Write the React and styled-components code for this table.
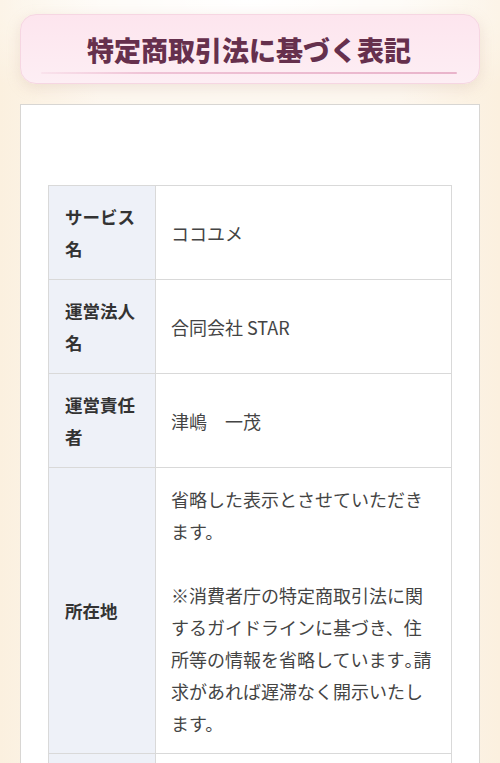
import styled, { createGlobalStyle } from "styled-components";

const GlobalStyle = createGlobalStyle`
  html, body {
    margin: 0;
    padding: 0;
  }
  body {
    background-color: #fcf3e4;
    background-image:
      radial-gradient(ellipse 70% 120px at 50% 0%, #ffffff 0%, rgba(255,255,255,0) 100%),
      linear-gradient(90deg, #fbf0df 0%, #fdf7ee 20%, #fdf7ee 80%, #fbf0df 100%);
    font-family: "Noto Sans CJK JP", "Noto Sans", sans-serif;
  }
`;

const Page = styled.div`
  padding: 14px 20px 0;
  min-height: 763px;
  box-sizing: border-box;
`;

const TitleCard = styled.div`
  background: linear-gradient(180deg, #fde5ee 0%, #fdeef4 100%);
  border: 1px solid #f6d6e2;
  border-radius: 16px;
  box-shadow: 0 4px 14px rgba(205, 170, 150, 0.28);
  padding: 18px 22px 9px 20px;
  margin-bottom: 20px;
`;

const Title = styled.h1`
  margin: 0;
  text-align: center;
  font-size: 27px;
  line-height: 34px;
  font-weight: 900;
  color: #66304d;
  letter-spacing: 0;
`;

const Underline = styled.div`
  height: 2px;
  margin-top: 5px;
  border-radius: 1px;
  background: linear-gradient(90deg, rgba(236, 185, 207, 0.2) 0%, #efc3d6 25%, #e9b4cb 100%);
`;

const Content = styled.div`
  background: #fff;
  border: 1px solid #d8d6d3;
  padding: 80px 27px 40px;
`;

const Table = styled.table`
  width: 100%;
  border-collapse: collapse;
  table-layout: fixed;
`;

const LabelCol = styled.col`
  width: 107px;
`;

const Head = styled.th`
  background: #eef1f8;
  border: 1px solid #d9d9d9;
  padding: 14.5px 12px 14.5px 16px;
  text-align: left;
  vertical-align: middle;
  font-size: 17.5px;
  line-height: 32px;
  font-weight: 700;
  color: #333;
`;

const Cell = styled.td`
  border: 1px solid #d9d9d9;
  padding: 14.5px 15px;
  vertical-align: middle;
  font-size: 18px;
  line-height: 32px;
  font-weight: 400;
  color: #444;
  word-break: break-all;
`;

// half-width punctuation, as the original text sets it
const Halt = styled.span`
  font-feature-settings: "halt";
`;

const rows = [
  { label: "サービス名", value: ["ココユメ"] },
  { label: "運営法人名", value: ["合同会社 STAR"] },
  { label: "運営責任者", value: ["津嶋\u3000一茂"] },
  {
    label: "所在地",
    value: [
      "省略した表示とさせていただきます。",
      "",
      <>
        ※消費者庁の特定商取引法に関するガイドラインに基づき、住所等の情報を省略しています<Halt>。</Halt>請求があれば遅滞なく開示いたします。
      </>,
    ],
  },
  { label: "電話番号", value: ["請求があれば遅滞なく開示いたします。"] },
];

function App() {
  return (
    <>
      <GlobalStyle />
      <Page>
        <TitleCard>
          <Title>特定商取引法に基づく表記</Title>
          <Underline />
        </TitleCard>
        <Content>
          <Table>
            <colgroup>
              <LabelCol />
              <col />
            </colgroup>
            <tbody>
              {rows.map((row) => (
                <tr key={row.label}>
                  <Head>{row.label}</Head>
                  <Cell>
                    {row.value.map((line, i) => (
                      <div key={i}>{line || "\u00a0"}</div>
                    ))}
                  </Cell>
                </tr>
              ))}
            </tbody>
          </Table>
        </Content>
      </Page>
    </>
  );
}

export default App;
